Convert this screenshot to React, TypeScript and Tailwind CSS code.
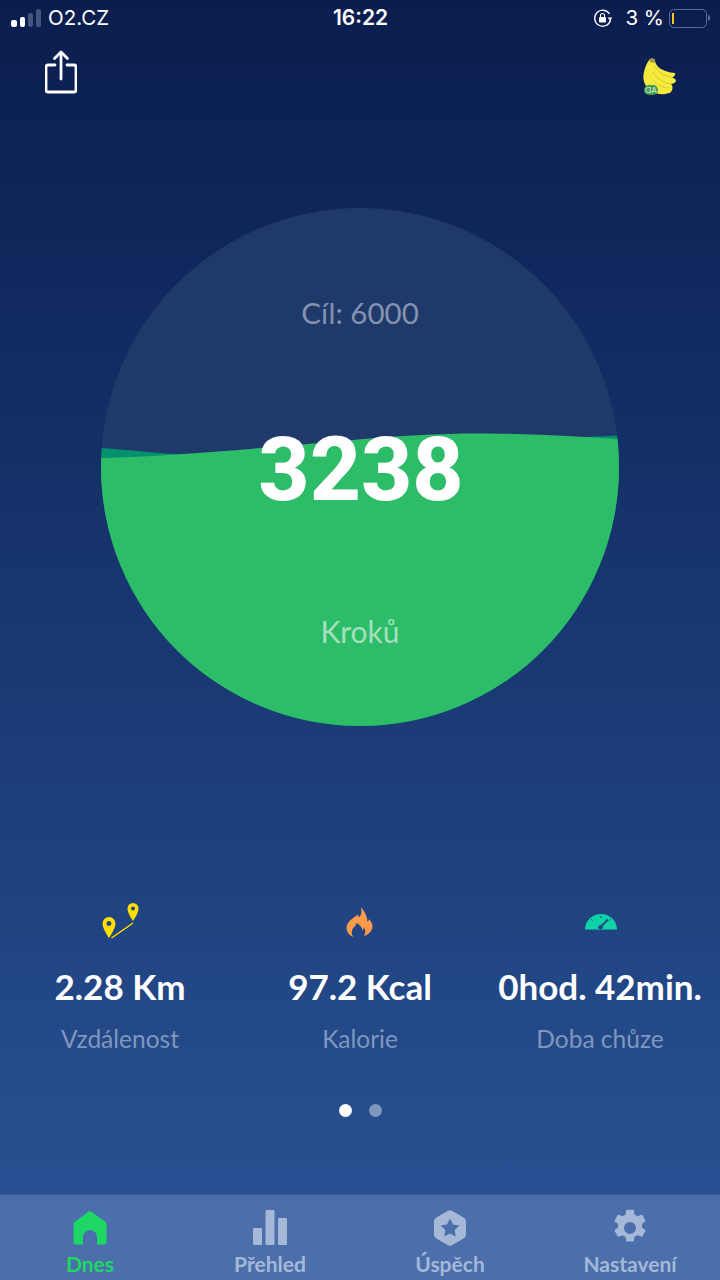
import React from "react";

const Stat = ({ icon, value, label }: { icon: React.ReactNode; value: string; label: string }) => (
  <div className="flex w-[240px] flex-col items-center">
    <div className="flex h-[50px] w-full items-center justify-center">{icon}</div>
    <div className="mt-[17px] whitespace-nowrap text-[35px] leading-[44px] font-bold text-white">{value}</div>
    <div className="mt-[15px] text-[24.5px] leading-[32px] text-[#7f97bd]">{label}</div>
  </div>
);

const Tab = ({ icon, label, active }: { icon: React.ReactNode; label: string; active?: boolean }) => (
  <div className="flex w-[180px] flex-col items-center pt-[14px]">
    <div className="flex h-[38px] items-center justify-center">{icon}</div>
    <div className={"mt-[3px] text-[21px] leading-[28px] font-bold " + (active ? "text-[#1fd765]" : "text-[#a5b8d8]")}>{label}</div>
  </div>
);

export default function App() {
  return (
    <div className="flex h-[1280px] w-[720px] flex-col overflow-hidden bg-gradient-to-b from-[#0a1d4e] to-[#2a5497] font-['Lato',sans-serif]">
      {/* status bar */}
      <div className="flex h-[36px] items-center justify-between pr-[10px] pl-[11px] font-['Inter',sans-serif] text-[20.5px] text-white">
        <div className="flex w-[200px] items-center">
          <div className="flex items-end gap-[3px]">
            <div className="h-[7px] w-[6px] rounded-[2px] bg-white" />
            <div className="h-[10px] w-[5px] rounded-[2px] bg-white" />
            <div className="h-[14px] w-[5px] rounded-[2px] bg-[#44557c]" />
            <div className="h-[18px] w-[5px] rounded-[2px] bg-[#44557c]" />
          </div>
          <span className="ml-[7px] leading-none">O2.CZ</span>
        </div>
        <div className="text-[21px] font-semibold">16:22</div>
        <div className="flex w-[200px] items-center justify-end">
          <svg width="20" height="20" viewBox="0 0 20 20" fill="none">
            <path d="M16.500 6A8 8 0 1 0 17.500 12" stroke="white" strokeWidth="1.300" fill="none" />
            <path d="M14.500 9.500h5l-2.500 3z" fill="white" />
            <rect x="6" y="9" width="7" height="5.500" rx="1" fill="white" />
            <path d="M7.500 9V7.500a2 2 0 0 1 4 0V9" stroke="white" strokeWidth="1.100" fill="none" />
          </svg>
          <span className="ml-[12px] leading-none">3 %</span>
          <div className="ml-[5px] flex items-center">
            <div className="flex h-[19px] w-[38px] items-center rounded-[5px] border-[1.5px] border-[#5c6b8e] px-[2px]">
              <div className="h-[11px] w-[2px] bg-[#f5c518]" />
            </div>
            <div className="ml-[1px] h-[6px] w-[2px] rounded-r-sm bg-[#5c6b8e]" />
          </div>
        </div>
      </div>

      {/* top actions */}
      <div className="flex h-[62px] items-start justify-between pr-[43px] pl-[45px]">
        <svg className="mt-[14px]" width="32" height="44" viewBox="0 0 32 44" fill="none" stroke="white" strokeWidth="2.800" strokeLinecap="round" strokeLinejoin="round">
          <path d="M10 15H3a2 2 0 0 0-2 2v23a2 2 0 0 0 2 2h26a2 2 0 0 0 2-2V17a2 2 0 0 0-2-2h-7" />
          <path d="M16 29V3" />
          <path d="M9.500 8.500 16 2l6.500 6.500" />
        </svg>
        <svg className="mt-[22px]" width="34" height="38" viewBox="0 0 34 38">
          <path d="M6 2C8 0 12 0 12 3c1 6 8 11 20 12 1 1-1 4-3 4.500 2 .5 4 1.500 4 3.500-1 2-3 3-5 3 2 2 2 5 0 8-4 3-14 3-20-1C2 29-1 22 1 14 2 9 4 5 6 2z" fill="#f6ea3f" />
          <path d="M12 8c3 6 9 10 17 11.500M10 14c3 6 10 11 18 12M10 22c3 4 8 7 15 8" stroke="#dcc92c" strokeWidth="1" fill="none" />
          <path d="M6 2C8 0 12 0 12 3l-.5 2L7 4z" fill="#a89a55" />
          <rect x="1" y="27" width="14" height="10" rx="5" fill="#3f9b50" />
          <text x="8" y="35" fontSize="8" fill="#dff3df" textAnchor="middle" fontFamily="Lato" transform="matrix(-1 0 0 1 16 0)">AD</text>
        </svg>
      </div>

      {/* main circle */}
      <div className="relative mx-auto mt-[110px] flex h-[518px] w-[518px] shrink-0 flex-col items-center overflow-hidden rounded-full bg-[#20396b]">
        <svg className="absolute inset-0" width="518" height="518" viewBox="0 0 518 518">
          <path d="M0 240 C30 242 55 245 85 247 L518 227.500 L518 518 L0 518 Z" fill="#02906e" />
          <path d="M0 250 C70 248 150 241 240 233 C300 227 350 225 390 225.500 C440 226 480 229 518 231 L518 518 L0 518 Z" fill="#2dbd68" />
        </svg>
        <div className="relative mt-[87px] text-[29.500px] leading-[36px] text-[#8393b0]">Cíl: 6000</div>
        <div className="relative mt-[87px] ml-[2px] font-['Roboto',sans-serif] text-[89px] leading-[104px] font-extrabold text-white">3238</div>
        <div className="relative mt-[91px] text-[30px] leading-[36px] text-[#a4e0bd]">Kroků</div>
      </div>

      {/* stats */}
      <div className="mt-[171px] flex">
        <Stat
          value="2.28 Km"
          label="Vzdálenost"
          icon={
            <svg className="ml-[1px]" width="38" height="38" viewBox="0 0 38 38" fill="#ffdf00">
              <path fillRule="evenodd" d="M7 14a6.500 6.500 0 0 1 6.500 6.500C13.500 25 9 32 7 35 5 32 .5 25 .5 20.500A6.500 6.500 0 0 1 7 14zm0 4a2.500 2.500 0 1 0 0 5 2.500 2.500 0 0 0 0-5z" />
              <path fillRule="evenodd" d="M31 0a5.500 5.500 0 0 1 5.500 5.500C36.500 9.500 33 15 31 18c-2-3-5.500-8.500-5.500-12.500A5.500 5.500 0 0 1 31 0zm0 3.500a2 2 0 1 0 0 4 2 2 0 0 0 0-4z" />
              <path d="M9.500 35 31 20" stroke="#ffdf00" strokeWidth="1.500" fill="none" />
            </svg>
          }
        />
        <Stat
          value="97.2 Kcal"
          label="Kalorie"
          icon={
            <svg width="30" height="30" viewBox="0 0 30 32" fill="#ff9a4d">
              <path d="M16 0c1 5 1 8-2 11-1-1-1-2-1-3-6 4-14 9-12 17 1 3 3 5 7 7-3-4-2-8 1-11 1-1 2-2 2-4 3 1 6 4 7 8 1-1 1-3 1-4 1 2 3 5 0 10 4-1 8-4 9-8 1-3 0-6-3-10-1 1-1 2-2 3 0-6-3-11-7-16z" />
            </svg>
          }
        />
        <Stat
          value="0hod. 42min."
          label="Doba chůze"
          icon={
            <svg className="ml-[2px]" width="32" height="16" viewBox="0 0 32 16">
              <path d="M0 15.500C0 7 7 0 16 0s16 7 16 15.500z" fill="#0fd3a6" />
              <circle cx="15.500" cy="13.500" r="2.800" fill="#214785" stroke="#0fd3a6" strokeWidth="1" />
              <path d="M15.500 13 23 5.500" stroke="#214785" strokeWidth="1.800" />
              <path d="M16 2v2M6 5l1.500 1.500M26 5l-1.500 1.500" stroke="#214785" strokeWidth="1" />
            </svg>
          }
        />
      </div>

      {/* pager */}
      <div className="mt-[49px] flex justify-center gap-[17px]">
        <div className="h-[13px] w-[13px] rounded-full bg-white" />
        <div className="h-[13px] w-[13px] rounded-full bg-[#7f97bd]" />
      </div>

      {/* tab bar */}
      <div className="mt-auto flex h-[86px] border-t border-[#3d5e93] bg-[#4a6fab]">
        <Tab
          active
          label="Dnes"
          icon={
            <svg width="34" height="34" viewBox="0 0 34 34" fill="#1fd765">
              <path fillRule="evenodd" d="M15.500.7a2.500 2.500 0 0 1 3 0l14 10.300a2.500 2.500 0 0 1 1 2V31.500a2 2 0 0 1-2 2H24V26a7 7 0 0 0-14 0v7.500H2.500a2 2 0 0 1-2-2V13a2.500 2.500 0 0 1 1-2z" />
            </svg>
          }
        />
        <Tab
          label="Přehled"
          icon={
            <svg width="34" height="36" viewBox="0 0 34 36" fill="#a5b8d8">
              <rect x="0" y="18" width="9" height="17" rx="1" />
              <rect x="12.500" y="0" width="9" height="35" rx="1" />
              <rect x="25" y="8" width="9" height="27" rx="1" />
            </svg>
          }
        />
        <Tab
          label="Úspěch"
          icon={
            <svg width="32" height="36" viewBox="0 0 32 36" fill="#a5b8d8">
              <path fillRule="evenodd" d="M14 .8a4 4 0 0 1 4 0l12 7A4 4 0 0 1 32 11.200v13.600a4 4 0 0 1-2 3.400l-12 7a4 4 0 0 1-4 0l-12-7a4 4 0 0 1-2-3.400V11.200A4 4 0 0 1 2 7.800zM16 8.500l-3 6-6.500.9 4.800 4.600-1.100 6.500 5.800-3.100 5.800 3.100-1.100-6.500 4.800-4.600-6.500-.9z" />
            </svg>
          }
        />
        <Tab
          label="Nastavení"
          icon={
            <svg width="38" height="38" viewBox="0 0 24 24" fill="#a5b8d8">
              <path fillRule="evenodd" d="M9.700.5h4.600l.6 3.100c.6.200 1.200.5 1.700.9l3-1 2.300 4-2.400 2.100a7 7 0 0 1 0 2l2.400 2-2.300 4-3-1c-.5.400-1.100.7-1.700.9l-.6 3h-4.600l-.6-3a7 7 0 0 1-1.700-1l-3 1-2.300-3.900 2.400-2.100a7 7 0 0 1 0-2L2.100 7.500l2.300-4 3 1c.5-.4 1.100-.7 1.700-.9zM12 8.200a3.800 3.800 0 1 0 0 7.600 3.800 3.800 0 0 0 0-7.600z" />
            </svg>
          }
        />
      </div>
    </div>
  );
}
